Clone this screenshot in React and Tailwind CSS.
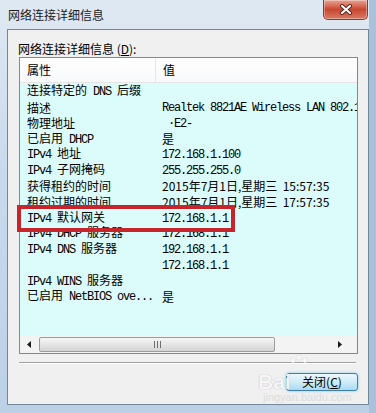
import React from 'react';

const rows = [
  { name: '连接特定的 DNS 后缀', value: '' },
  { name: '描述', value: 'Realtek 8821AE Wireless LAN 802.11ac PCI-E NIC' },
  { name: '物理地址', value: '·E2-', indent: true },
  { name: '已启用 DHCP', value: '是' },
  { name: 'IPv4 地址', value: '172.168.1.100' },
  { name: 'IPv4 子网掩码', value: '255.255.255.0' },
  { name: '获得租约的时间', value: '2015年7月1日,星期三  15:57:35', sans: true },
  { name: '租约过期的时间', value: '2015年7月1日,星期三  17:57:35', sans: true },
  { name: 'IPv4 默认网关', value: '172.168.1.1' },
  { name: 'IPv4 DHCP 服务器', value: '172.168.1.1' },
  { name: 'IPv4 DNS 服务器', value: '192.168.1.1' },
  { name: '', value: '172.168.1.1' },
  { name: 'IPv4 WINS 服务器', value: '' },
  { name: '已启用 NetBIOS ove...', value: '是' },
];

const cjk = /[\u3000-\u9fff\uff00-\uffef]/;

// SimSun-like: CJK at 12px, latin in a 6px-wide mono cell
const Mixed = ({ text }) =>
  text
    .split(/([\u3000-\u9fff\uff00-\uffef]+)/)
    .filter(Boolean)
    .map((part, i) =>
      cjk.test(part) ? (
        <span key={i} className="font-['Noto_Sans_CJK_SC',sans-serif] text-[12px]">
          {part}
        </span>
      ) : (
        <span key={i} className="font-['Liberation_Mono',monospace] text-[12px] tracking-[-1.2px]">
          {part}
        </span>
      )
    );

const CloseX = () => (
  <svg width="14" height="11" viewBox="0 0 14 11">
    <path d="M3 2 L11 9 M11 2 L3 9" stroke="#5a1d16" strokeWidth="4" strokeLinecap="round" />
    <path d="M3 2 L11 9 M11 2 L3 9" stroke="#ffffff" strokeWidth="2.2" strokeLinecap="round" />
  </svg>
);

const Arrow = ({ dir }) => (
  <svg width="4" height="7" viewBox="0 0 4 7">
    {dir === 'left' ? <path d="M4 0 L0 3.5 L4 7 Z" fill="#1a1a1a" /> : <path d="M0 0 L4 3.5 L0 7 Z" fill="#1a1a1a" />}
  </svg>
);

export default function App() {
  return (
    <div className="relative flex h-[413px] w-[376px] flex-col overflow-hidden bg-[linear-gradient(to_right,transparent_369px,#a9c1da_369px),linear-gradient(to_bottom,#dfe9f3,#c9daec_40%,#bcd0e6)] px-[7px] pb-[8px]">
      {/* title bar */}
      <div className="flex h-[29px] shrink-0 items-start justify-between">
        <span className="ml-[1px] mt-[7px] font-['Noto_Sans_CJK_SC',sans-serif] text-[12px] leading-[16px] text-[#1b1b1b]">
          网络连接详细信息
        </span>
        <div className="mr-[1px] flex h-[20px] w-[45px] items-center justify-center rounded-b-[5px] border border-t-0 border-[#8a3a30] bg-gradient-to-b from-[#e7a292] via-[#c9462f] to-[#d77a66] shadow-[inset_0_0_0_1px_rgba(255,255,255,0.35)]">
          <CloseX />
        </div>
      </div>

      {/* client area */}
      <div className="flex flex-1 flex-col border border-[#74869a] bg-[#f0f0f0] font-['Noto_Sans_CJK_SC',sans-serif] text-black">
        <div className="ml-[10px] mt-[11px] h-[16px] text-[12px] leading-[16px]">
          网络连接详细信息 (<span className="underline">D</span>):
        </div>

        <div className="ml-[11px] flex h-[297px] w-[339px] flex-col overflow-hidden border border-[#828790] bg-[#dcfcfc]">
          <div className="flex h-[25px] shrink-0 border-b border-[#e5e5e5] bg-gradient-to-b from-white to-[#f8f9fb] text-[12px]">
            <div className="flex w-[136px] items-center border-r border-[#e5e5e5] pl-[7px]">属性</div>
            <div className="flex items-center pl-[7px]">值</div>
          </div>

          {rows.map((r, i) => (
            <div key={i} className="flex h-[15.77px] shrink-0 items-center whitespace-pre leading-[15px]">
              <div className="w-[136px] shrink-0 pl-[7px]">
                <Mixed text={r.name} />
              </div>
              <div className={r.indent ? 'pl-[12px]' : 'pl-[6px]'}>
                {r.sans ? <span className="text-[12px]">{r.value}</span> : <Mixed text={r.value} />}
              </div>
            </div>
          ))}

          <div className="flex-1" />

          {/* horizontal scrollbar */}
          <div className="flex h-[18px] shrink-0 items-center bg-[#f3f3f3]">
            <div className="flex w-[17px] justify-center">
              <Arrow dir="left" />
            </div>
            <div className="ml-[2px] flex h-[15px] w-[236px] items-center justify-center rounded-[2px] border border-[#9b9b9b] bg-gradient-to-b from-[#f6f6f6] via-[#e6e6e6] to-[#d4d4d4]">
              <div className="flex gap-[2px]">
                <div className="h-[7px] w-[1px] bg-[#6d6d6d]" />
                <div className="h-[7px] w-[1px] bg-[#6d6d6d]" />
                <div className="h-[7px] w-[1px] bg-[#6d6d6d]" />
              </div>
            </div>
            <div className="flex-1" />
            <div className="mr-[9px] flex w-[17px] justify-center">
              <Arrow dir="right" />
            </div>
          </div>
        </div>

        <div className="ml-[11px] mt-[8px] h-[2px] w-[337px] border-b border-t border-b-white border-t-[#a0a0a0]" />

        <div className="mt-[9px] flex justify-end pr-[10px]">
          <div className="flex h-[18px] w-[72px] items-center justify-center rounded-[3px] border border-[#3c7fb1] bg-gradient-to-b from-[#eaf6fd] via-[#d0ecfa] to-[#a9daf3] text-[12px] leading-[16px] shadow-[0_0_3px_#7fcbef]">
            关闭(<span className="underline">C</span>)
          </div>
        </div>
      </div>

      {/* baidu watermark */}
      <div className="pointer-events-none absolute left-[258px] top-[371px] font-['Liberation_Sans',sans-serif] text-[21px] font-bold leading-[22px] text-[#f7f7f7] opacity-90 [text-shadow:0_0_1px_#9aa3ad]">
        Bai
      </div>
      <div className="pointer-events-none absolute left-[291px] top-[358px] flex gap-[2px] opacity-80">
        <div className="h-[5px] w-[4px] rounded-full bg-[#f9f9f9] shadow-[0_0_1px_#9aa3ad]" />
        <div className="mt-[-3px] h-[5px] w-[4px] rounded-full bg-[#f9f9f9] shadow-[0_0_1px_#9aa3ad]" />
        <div className="h-[5px] w-[4px] rounded-full bg-[#f9f9f9] shadow-[0_0_1px_#9aa3ad]" />
      </div>
      <div className="pointer-events-none absolute left-[263px] top-[391px] font-['Liberation_Sans',sans-serif] text-[11px] leading-[12px] text-[#dcdcdc]">
        jingyan.baidu.com
      </div>

      {/* annotation box */}
      <div className="pointer-events-none absolute left-[17px] top-[205px] h-[27px] w-[218px] border-[4px] border-[#c8242c]" />
    </div>
  );
}
